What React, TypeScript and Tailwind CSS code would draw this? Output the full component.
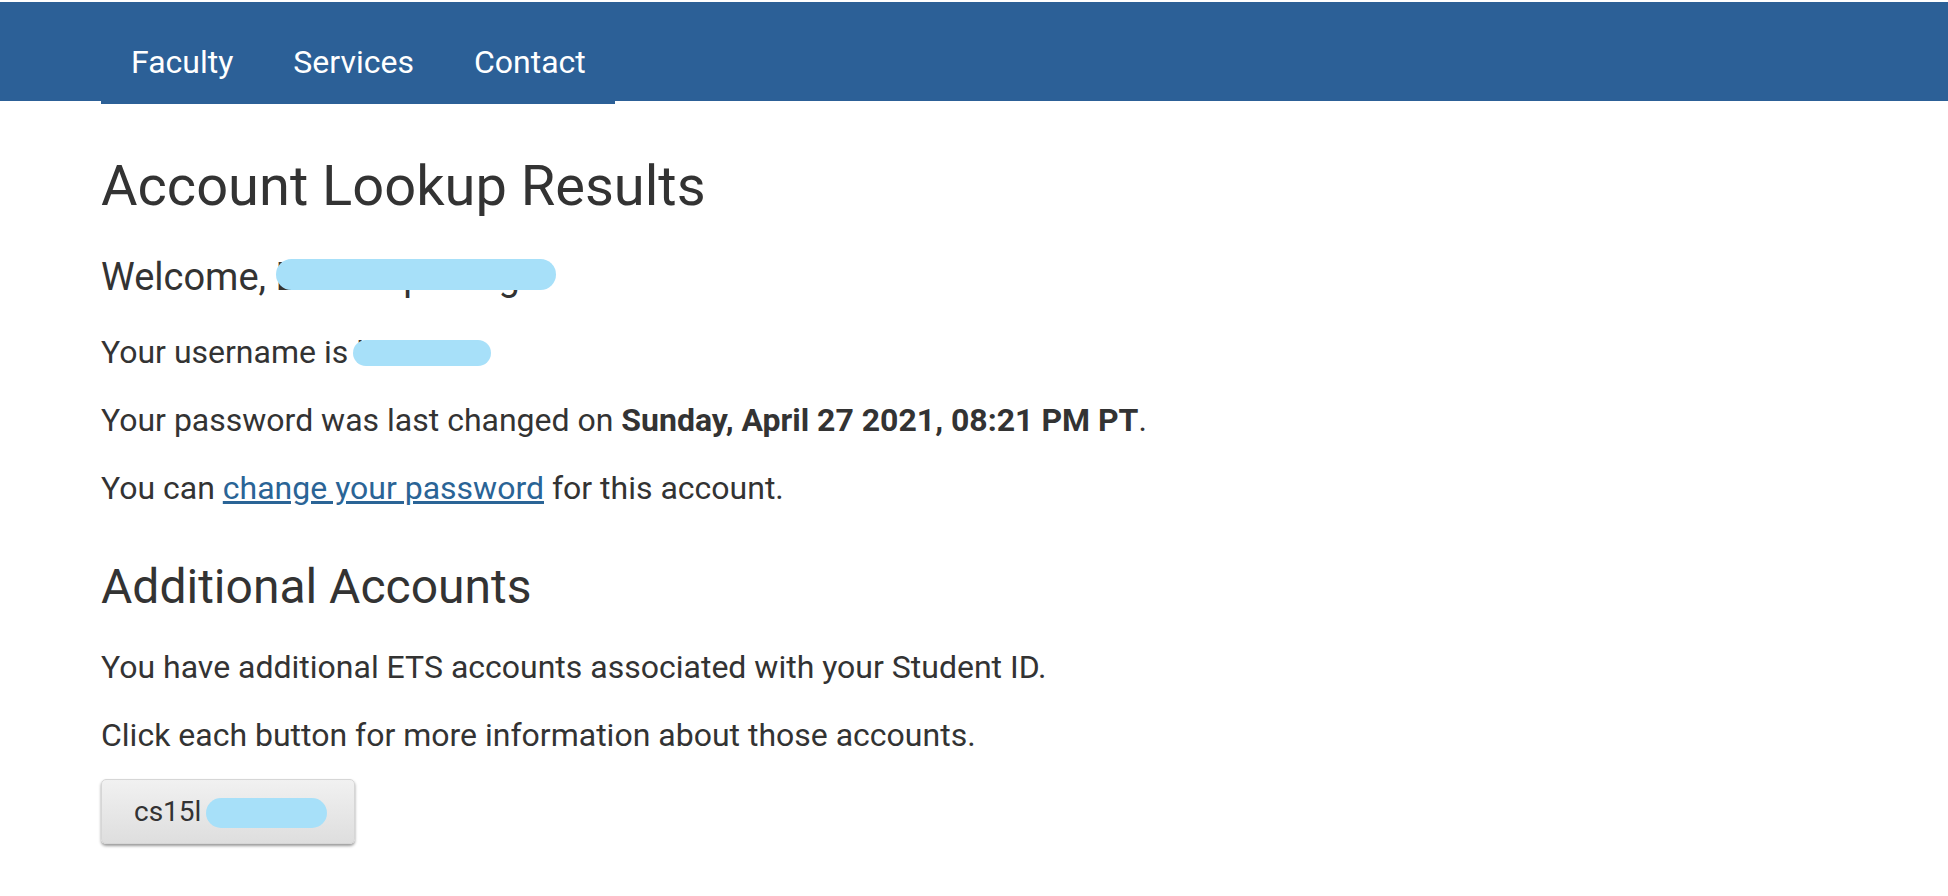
const NAV_LINKS = ["Faculty", "Services", "Contact"];

function Blob({ className }: { className: string }) {
  return <span className={`absolute rounded-full bg-[#a7e0f9] ${className}`} />;
}

export default function App() {
  return (
    <div
      className="min-h-screen bg-white pt-[2px] text-[#333333]"
      style={{ fontFamily: "Roboto, 'Liberation Sans', sans-serif" }}
    >
      {/* ── Top bar ── */}
      <header className="h-[99px] bg-[#2c6097]">
        <nav className="ml-[101px] flex h-[102px] w-[514px] bg-[#2c6097]">
          {NAV_LINKS.map((label) => (
            <a
              key={label}
              href="#"
              className="px-[30px] pt-[40px] text-[32px] leading-[40px] text-white"
            >
              {label}
            </a>
          ))}
        </nav>
      </header>

      {/* ── Main content ── */}
      <main className="ml-[101px] pt-[54px]">
        <h1 className="text-[56px] leading-[62px] font-normal">Account Lookup Results</h1>

        <p className="relative mt-[40px] text-[38px] leading-[40px]">
          Welcome, Lorem Ipsumg.
          <Blob className="left-[175px] top-[2px] h-[31px] w-[280px]" />
        </p>

        <p className="relative mt-[33px] text-[32px] leading-[44px]">
          Your username is lxxxxxx
          <Blob className="left-[252px] top-[10px] h-[26px] w-[138px]" />
        </p>

        <p className="mt-[24px] text-[32px] leading-[44px]">
          Your password was last changed on{" "}
          <span className="font-bold">Sunday, April 27 2021, 08:21 PM PT</span>.
        </p>

        <p className="mt-[24px] text-[32px] leading-[44px]">
          You can{" "}
          <a href="#" className="text-[#2a6496] underline">
            change your password
          </a>{" "}
          for this account.
        </p>

        <h2 className="mt-[51px] text-[48px] leading-[51px] font-normal">Additional Accounts</h2>

        <p className="mt-[33px] text-[32px] leading-[44px]">
          You have additional ETS accounts associated with your Student ID.
        </p>

        <p className="mt-[24px] text-[32px] leading-[44px]">
          Click each button for more information about those accounts.
        </p>

        <button className="relative mt-[22px] flex h-[65px] w-[254px] items-center rounded-[5px] border border-[#d6d6d6] bg-gradient-to-b from-[#f1f1f1] to-[#dedede] pl-[32px] text-[28px] text-[#333333] shadow-[0_2px_3px_rgba(0,0,0,0.4)]">
          cs15l xxxxp
          <Blob className="left-[104px] top-[18px] h-[30px] w-[121px]" />
        </button>
      </main>
    </div>
  );
}
